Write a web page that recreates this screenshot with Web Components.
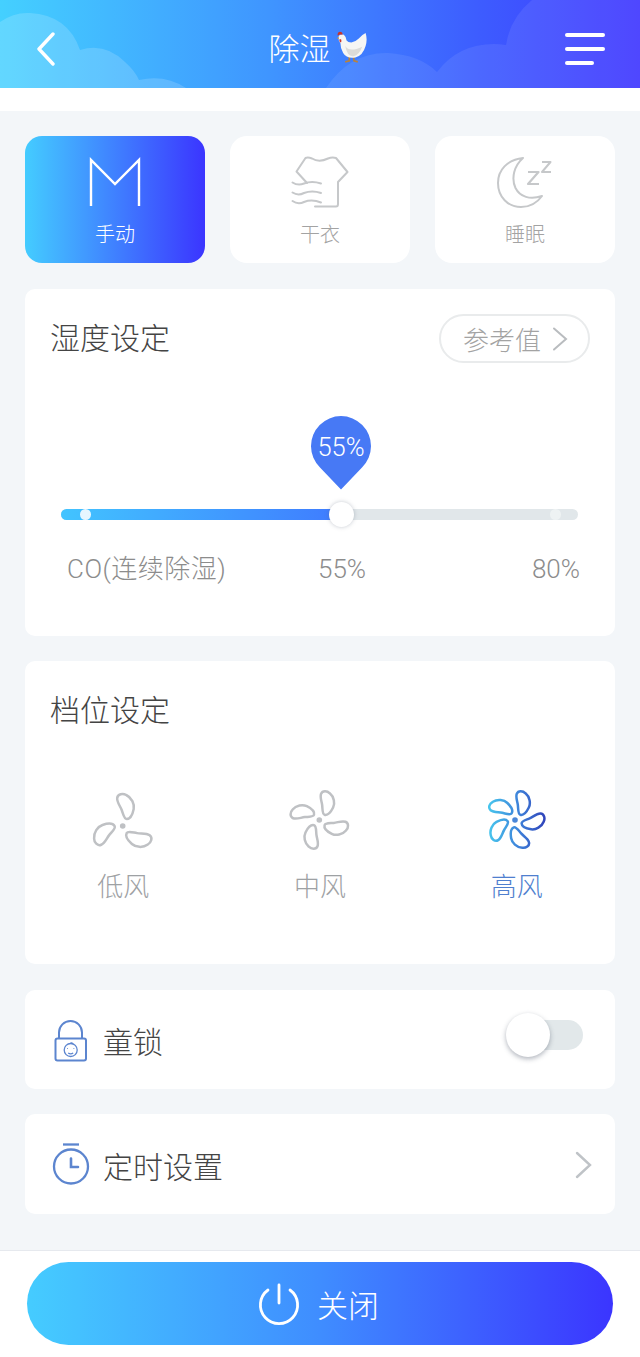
<!doctype html>
<html lang="zh">
<head>
<meta charset="utf-8">
<title>除湿</title>
<style>
html, body { margin: 0; padding: 0; background: #fff; }
body { font-family: Roboto, "Noto Sans CJK SC", sans-serif; font-weight: 300; }
</style>
</head>
<body>
<dh-app>
	<dh-header slot="header" title="除湿"></dh-header>
	<dh-tabs slot="tabs">
		<dh-tab active label="手动" icon="manual"></dh-tab>
		<dh-tab label="干衣" icon="shirt"></dh-tab>
		<dh-tab label="睡眠" icon="moon"></dh-tab>
	</dh-tabs>
	<dh-humidity slot="humidity"></dh-humidity>
	<dh-speed slot="speed"></dh-speed>
	<dh-row slot="lock" label="童锁" icon="lock"><dh-toggle></dh-toggle></dh-row>
	<dh-row slot="timer" label="定时设置" icon="clock"><dh-chevron></dh-chevron></dh-row>
	<dh-footer slot="footer"></dh-footer>
</dh-app>
<script>
'use strict'
const GRAD = 'linear-gradient(90deg, #45ccff 0%, #3f8dff 50%, #3b35ff 100%)'

function shadow(el, html) {
	el.attachShadow({ mode: 'open' }).innerHTML = html
}

const ICONS = {
	manual: `<svg width="60" height="56" viewBox="0 0 60 56" fill="none" stroke="#fff" stroke-width="2.400"><path d="M6 52V6L30 30L54 6V52"/></svg>`,
	shirt: `<svg width="60" height="56" viewBox="0 0 60 56" fill="none" stroke="#c6c8ca" stroke-width="2" stroke-linecap="round" stroke-linejoin="round">
		<path d="M17 29L6.500 17.500L15.500 4Q18 3 22 4.500Q29 9 38 4.500Q42 3 46 4L57.500 18L48 28V50Q48 52.500 46 52.500H25"/>
		<path d="M2.500 28.500Q8 32 14 29.500Q22 26.500 31 29.500"/>
		<path d="M2.500 38.500Q8 42 14 39Q22 36 31 39"/>
		<path d="M2.500 47Q8 51 14 48Q22 45 31 48.500"/>
	</svg>`,
	moon: `<svg width="60" height="56" viewBox="0 0 60 56" fill="none" stroke="#c6c8ca" stroke-width="2" stroke-linejoin="round">
		<path d="M28 4C12 6 3 16 3 29C3 43 13 53 26 53C35 53 42 49 47 42C35 46 25 43 20.500 34C16 24 19 12 28 4Z"/>
		<path d="M33 18H43.500L33 30H44" stroke-width="2.200"/>
		<path d="M47 8H55.500L47 18H56" stroke-width="2"/>
	</svg>`,
	lock: `<svg width="40" height="46" viewBox="0 0 40 46" fill="none" stroke="#5c85cf" stroke-width="2">
		<path d="M8 21V15.500A11.500 11.500 0 0 1 31 15.500V21"/>
		<rect x="4.500" y="21.500" width="30.500" height="22" rx="2"/>
		<circle cx="19.700" cy="33" r="6.500" stroke-width="1.300"/>
		<path d="M16.200 31.500h.8M22.500 31.500h.8M17.200 36q2.500 1.800 5 0M19.200 26.500q2 -1.500 2.500 .5" stroke-width="1.200"/>
	</svg>`,
	clock: `<svg width="40" height="46" viewBox="0 0 40 46" fill="none" stroke="#5c85cf" stroke-width="2.300">
		<path d="M12 3.500H28"/>
		<circle cx="20" cy="25.500" r="17"/>
		<path d="M20 17.500V26H27" stroke-linecap="round" stroke-width="2.600"/>
	</svg>`,
}

class DhApp extends HTMLElement {
	constructor() {
		super()
		shadow(this, `<style>
			:host { display: flex; flex-direction: column; width: 640px; height: 1357px; overflow: hidden; background: #fff; }
			.main { flex: 1; margin-top: 23px; padding: 25px 25px 0; background: #f3f6f9; display: flex; flex-direction: column; }
			::slotted([slot=humidity]) { margin-top: 26px; }
			::slotted([slot=speed]) { margin-top: 25px; }
			::slotted([slot=lock]) { margin-top: 26px; height: 99px; }
			::slotted([slot=timer]) { margin-top: 25px; height: 100px; }
		</style>
		<slot name="header"></slot>
		<div class="main">
			<slot name="tabs"></slot>
			<slot name="humidity"></slot>
			<slot name="speed"></slot>
			<slot name="lock"></slot>
			<slot name="timer"></slot>
		</div>
		<slot name="footer"></slot>`)
	}
}

class DhHeader extends HTMLElement {
	constructor() {
		super()
		shadow(this, `<style>
			:host { display: block; position: relative; height: 88px; overflow: hidden; background: linear-gradient(90deg, #44d0ff 0%, #3f95ff 42%, #3d5cff 75%, #4038ff 100%); color: #fff; }
			.clouds { position: absolute; left: 0; top: 0; }
			.bar { position: relative; height: 100%; box-sizing: border-box; display: flex; align-items: center; justify-content: space-between; padding: 10px 35px 0 36px; }
			.title { position: absolute; left: 268.500px; top: 29px; display: flex; align-items: center; font-size: 31px; line-height: 40px; }
			.title span { position: relative; top: 1px; }
			.title svg { margin-left: 6px; margin-top: -2px; }
			.menu { display: flex; flex-direction: column; gap: 10px; width: 40px; }
			.menu i { display: block; height: 4px; border-radius: 2px; background: #fff; }
			.menu i:last-child { width: 29px; }
		</style>
		<svg class="clouds" width="640" height="88" viewBox="0 0 640 88" fill="#fff">
			<g fill-opacity=".16">
				<path d="M0 88V22Q14 12 30 13Q68 15 80 50Q105 42 125 62Q135 71 139 80Q165 74 186 88Z"/>
			</g>
			<g fill-opacity=".08">
				<path d="M326 88Q350 52 388 53Q420 55 437 72Q458 44 494 44Q500 44 506 45Q510 18 532 0H640V88Z"/>
			</g>
		</svg>
		<div class="bar">
			<svg width="20" height="34" viewBox="0 0 20 34" fill="none" stroke="#fff" stroke-width="3.400" stroke-linecap="round" stroke-linejoin="round"><path d="M17 2L3 17L17 32"/></svg>
			<div class="title"><span>${this.getAttribute('title')}</span>
				<svg width="30" height="34" viewBox="36 20 88 100">
					<path d="M72 94V108L60 111M84 94L86 108L97 111" fill="none" stroke="#b9823c" stroke-width="5"/>
					<path d="M40 38Q44 26 56 31Q64 38 64 48Q68 54 78 54Q90 52 100 42Q108 32 120 26Q126 45 120 64Q112 92 90 98Q64 102 54 85Q46 72 46 56Q40 50 40 38Z" fill="#f6f6f4"/>
					<path d="M60 64Q72 84 110 66Q102 90 84 94Q66 96 60 64Z" fill="#dcdcd9"/>
					<path d="M38 34Q36 23 44 22Q53 22 52 31Q44 28 38 34Z" fill="#c9352b"/>
					<path d="M40 37L36 42L42 43Z" fill="#d9962f"/>
					<path d="M43 44Q42 54 48 53Q50 48 48 44Z" fill="#c9352b"/>
				</svg>
			</div>
			<div class="menu"><i></i><i></i><i></i></div>
		</div>`)
	}
}

class DhTabs extends HTMLElement {
	constructor() {
		super()
		shadow(this, `<style>
			:host { display: grid; grid-template-columns: repeat(3, 180px); gap: 25px; }
		</style><slot></slot>`)
	}
}

class DhTab extends HTMLElement {
	constructor() {
		super()
		const active = this.hasAttribute('active')
		shadow(this, `<style>
			:host { display: flex; flex-direction: column; align-items: center; height: 127px; box-sizing: border-box; padding-top: 18px; border-radius: 17px;
				background: ${active ? 'linear-gradient(90deg, #44ccff, #3b35ff)' : '#fff'};
				color: ${active ? '#fff' : '#a3a3a3'}; font-size: 20px; }
			span { margin-top: 11px; line-height: 28px; }
		</style>${ICONS[this.getAttribute('icon')]}<span>${this.getAttribute('label')}</span>`)
	}
}

class DhCard extends HTMLElement {
	constructor() {
		super()
		shadow(this, `<style>
			:host { display: block; background: #fff; border-radius: 10px; box-sizing: border-box; padding: 30px 26px 0 25px; color: #444; }
			.top { display: flex; justify-content: space-between; align-items: flex-start; }
			h2 { margin: 0; font-size: 30px; font-weight: 300; line-height: 40px; }
		</style>
		<div class="top"><h2>${this.getAttribute('heading')}</h2><slot name="action"></slot></div>
		<slot></slot>`)
	}
}

class DhHumidity extends HTMLElement {
	constructor() {
		super()
		shadow(this, `<style>
			:host { display: block; }
			dh-card { height: 347px; }
			.ref { display: flex; align-items: center; box-sizing: border-box; width: 151px; height: 49px; margin: -5px -1px 0 0; padding-left: 22px; gap: 11px; border: 2px solid #e9ebec; border-radius: 25px; color: #a3a3a3; font-size: 26px; }
		</style>
		<dh-card heading="湿度设定">
			<div class="ref" slot="action">参考值
				<svg width="16" height="24" viewBox="0 0 16 24" fill="none" stroke="#b9bcbf" stroke-width="2" stroke-linecap="round"><path d="M2 1.500L14 12L2 22.500"/></svg>
			</div>
			<dh-slider></dh-slider>
		</dh-card>`)
	}
}

class DhSlider extends HTMLElement {
	constructor() {
		super()
		shadow(this, `<style>
			:host { display: block; margin: 51px -26px 0 -25px; color: #8c8c8c; }
			.stage { position: relative; height: 134px; }
			.track { position: absolute; left: 36px; top: 95px; width: 517px; height: 10.500px; border-radius: 6px; background: #e1e7ea; overflow: hidden; }
			.fill { height: 100%; width: 280px; background: linear-gradient(90deg, #42c4ff, #3f7bff); }
			.dot { position: absolute; top: 95px; width: 10.500px; height: 10.500px; border-radius: 50%; margin-left: -5px; }
			.handle { position: absolute; left: 316px; top: 100px; width: 25px; height: 25px; margin: -12.500px 0 0 -12.500px; border-radius: 50%; background: #fff; box-shadow: 0 0 4px rgba(90,100,120,.35); }
			.pin { position: absolute; left: 286px; top: 2px; width: 60px; height: 74px; }
			.pin b { position: absolute; left: 0; top: 14px; width: 60px; text-align: center; color: #fff; font-weight: 300; font-size: 25.500px; line-height: 34px; }
			.labels { display: grid; grid-template-columns: 251px 48px 1fr; margin: 0 35px 0 42px; font-size: 26px; line-height: 36px; white-space: nowrap; position: relative; top: 3px; }
			.labels span:first-child { letter-spacing: .5px; }
			.labels span:last-child { text-align: right; }
		</style>
		<div class="stage">
			<div class="track"><div class="fill"></div></div>
			<div class="dot" style="left:60px;background:#e6f6ff"></div>
			<div class="dot" style="left:530px;background:#eef2f3"></div>
			<div class="handle"></div>
			<div class="pin">
				<svg width="60" height="74" viewBox="0 0 60 74"><path d="M30 73.500L9 51.500A30 30 0 1 1 51 51.500Z" fill="#4779f5"/></svg>
				<b>55%</b>
			</div>
		</div>
		<div class="labels"><span>CO(连续除湿)</span><span>55%</span><span>80%</span></div>`)
	}
}

// one blade of the fan, around the centre 0,0
const BLADE = [[4, -7], [1.5, -7], [0.8, -11], [-1, -16], [-2.5, -20], [-6, -24], [-5.5, -28], [-5, -32], [0, -33], [3.5, -31], [9, -28.5], [12, -22], [11, -17], [10, -12], [7.5, -7], [4, -7]]

class DhFan extends HTMLElement {
	constructor() {
		super()
		const n = +this.getAttribute('blades')
		const start = +(this.getAttribute('start') || 0)
		const size = +(this.getAttribute('size') || 1)
		const cx = +(this.getAttribute('cx') || 35)
		const cy = +(this.getAttribute('cy') || 35)
		const on = this.hasAttribute('active')
		let d = ''
		for (let k = 0; k < n; k++) {
			const a = ((start + (k * 360) / n) * Math.PI) / 180
			const p = BLADE.map(([x, y]) => [
				(cx + size * (x * Math.cos(a) - y * Math.sin(a))).toFixed(2),
				(cy + size * (x * Math.sin(a) + y * Math.cos(a))).toFixed(2),
			])
			d += `M${p[0]}`
			for (let i = 1; i < p.length; i += 3) d += `C${p[i]} ${p[i + 1]} ${p[i + 2]}`
			d += 'Z'
		}
		const stroke = on ? 'url(#g)' : '#bfc1c4'
		shadow(this, `<style>
			:host { display: flex; flex-direction: column; align-items: center; color: ${on ? '#4f7fcf' : '#9ea1a4'}; font-size: 26px; }
			span { line-height: 36px; margin-top: 12px; }
		</style>
		<svg width="70" height="70" viewBox="0 0 70 70" fill="none">
			<defs><linearGradient id="g" gradientUnits="userSpaceOnUse" x1="5" y1="35" x2="65" y2="35">
				<stop offset="0" stop-color="#47c9ee"/><stop offset=".5" stop-color="#3f86db"/><stop offset="1" stop-color="#2f3fb8"/>
			</linearGradient></defs>
			<path d="${d}" stroke="${stroke}" stroke-width="2.500"/>
			<circle cx="${cx}" cy="${cy}" r="2.800" fill="${on ? '#4a86d8' : '#bfc1c4'}"/>
		</svg>
		<span>${this.getAttribute('label')}</span>`)
	}
}

class DhSpeed extends HTMLElement {
	constructor() {
		super()
		shadow(this, `<style>
			:host { display: block; }
			dh-card { height: 303px; }
			.fans { display: grid; grid-template-columns: repeat(3, 1fr); margin: 56px -26px 0 -25px; }
		</style>
		<dh-card heading="档位设定">
			<div class="fans">
				<dh-fan blades="3" start="0" cx="34.700" cy="39" label="低风"></dh-fan>
				<dh-fan blades="4" start="15" size=".92" cx="34.300" cy="33" label="中风"></dh-fan>
				<dh-fan blades="5" start="15" size=".92" cx="33" cy="33" active label="高风"></dh-fan>
			</div>
		</dh-card>`)
	}
}

class DhRow extends HTMLElement {
	constructor() {
		super()
		shadow(this, `<style>
			:host { display: flex; align-items: center; background: #fff; border-radius: 10px; padding: 0 32px 0 26px; color: #444; font-size: 30px; box-sizing: border-box; }
			svg { margin-right: 12px; flex: none; }
			span { flex: 1; line-height: 40px; padding-top: 7px; }
		</style>${ICONS[this.getAttribute('icon')]}<span>${this.getAttribute('label')}</span><slot></slot>`)
	}
}

class DhToggle extends HTMLElement {
	constructor() {
		super()
		shadow(this, `<style>
			:host { display: block; position: relative; width: 62px; height: 30px; margin-top: -10px; border-radius: 15px; background: #e2e8ea; }
			i { position: absolute; left: -15px; top: -7px; width: 44px; height: 44px; border-radius: 50%; background: #fff; box-shadow: 0 2px 5px rgba(60,70,90,.4); }
		</style><i></i>`)
	}
}

class DhChevron extends HTMLElement {
	constructor() {
		super()
		shadow(this, `<style>
			:host { display: block; line-height: 0; margin: 2px -10px 0 0; }
		</style><svg width="18" height="28" viewBox="0 0 18 28" fill="none" stroke="#bfc3c7" stroke-width="2.400" stroke-linecap="round"><path d="M2 2L15 14L2 26"/></svg>`)
	}
}

class DhFooter extends HTMLElement {
	constructor() {
		super()
		shadow(this, `<style>
			:host { display: block; height: 107px; box-sizing: border-box; padding: 11px 27px 0; background: #fff; border-top: 1px solid #e6e9ee; }
			button { display: flex; align-items: center; justify-content: center; gap: 17px; width: 586px; height: 83px; padding: 0 3px 0 0; border: 0; border-radius: 42px; background: ${GRAD}; color: #fff; font: inherit; font-size: 31px; }
			span { line-height: 40px; padding-top: 6px; }
		</style>
		<button>
			<svg width="42" height="42" viewBox="0 0 42 42" fill="none" stroke="#fff" stroke-width="2.800" stroke-linecap="round"><path d="M21 2V20"/><path d="M10 7A18.600 18.600 0 1 0 32 7"/></svg>
			<span>关闭</span>
		</button>`)
	}
}

customElements.define('dh-card', DhCard)
customElements.define('dh-slider', DhSlider)
customElements.define('dh-fan', DhFan)
customElements.define('dh-toggle', DhToggle)
customElements.define('dh-chevron', DhChevron)
customElements.define('dh-header', DhHeader)
customElements.define('dh-tabs', DhTabs)
customElements.define('dh-tab', DhTab)
customElements.define('dh-humidity', DhHumidity)
customElements.define('dh-speed', DhSpeed)
customElements.define('dh-row', DhRow)
customElements.define('dh-footer', DhFooter)
customElements.define('dh-app', DhApp)
</script>
</body>
</html>
